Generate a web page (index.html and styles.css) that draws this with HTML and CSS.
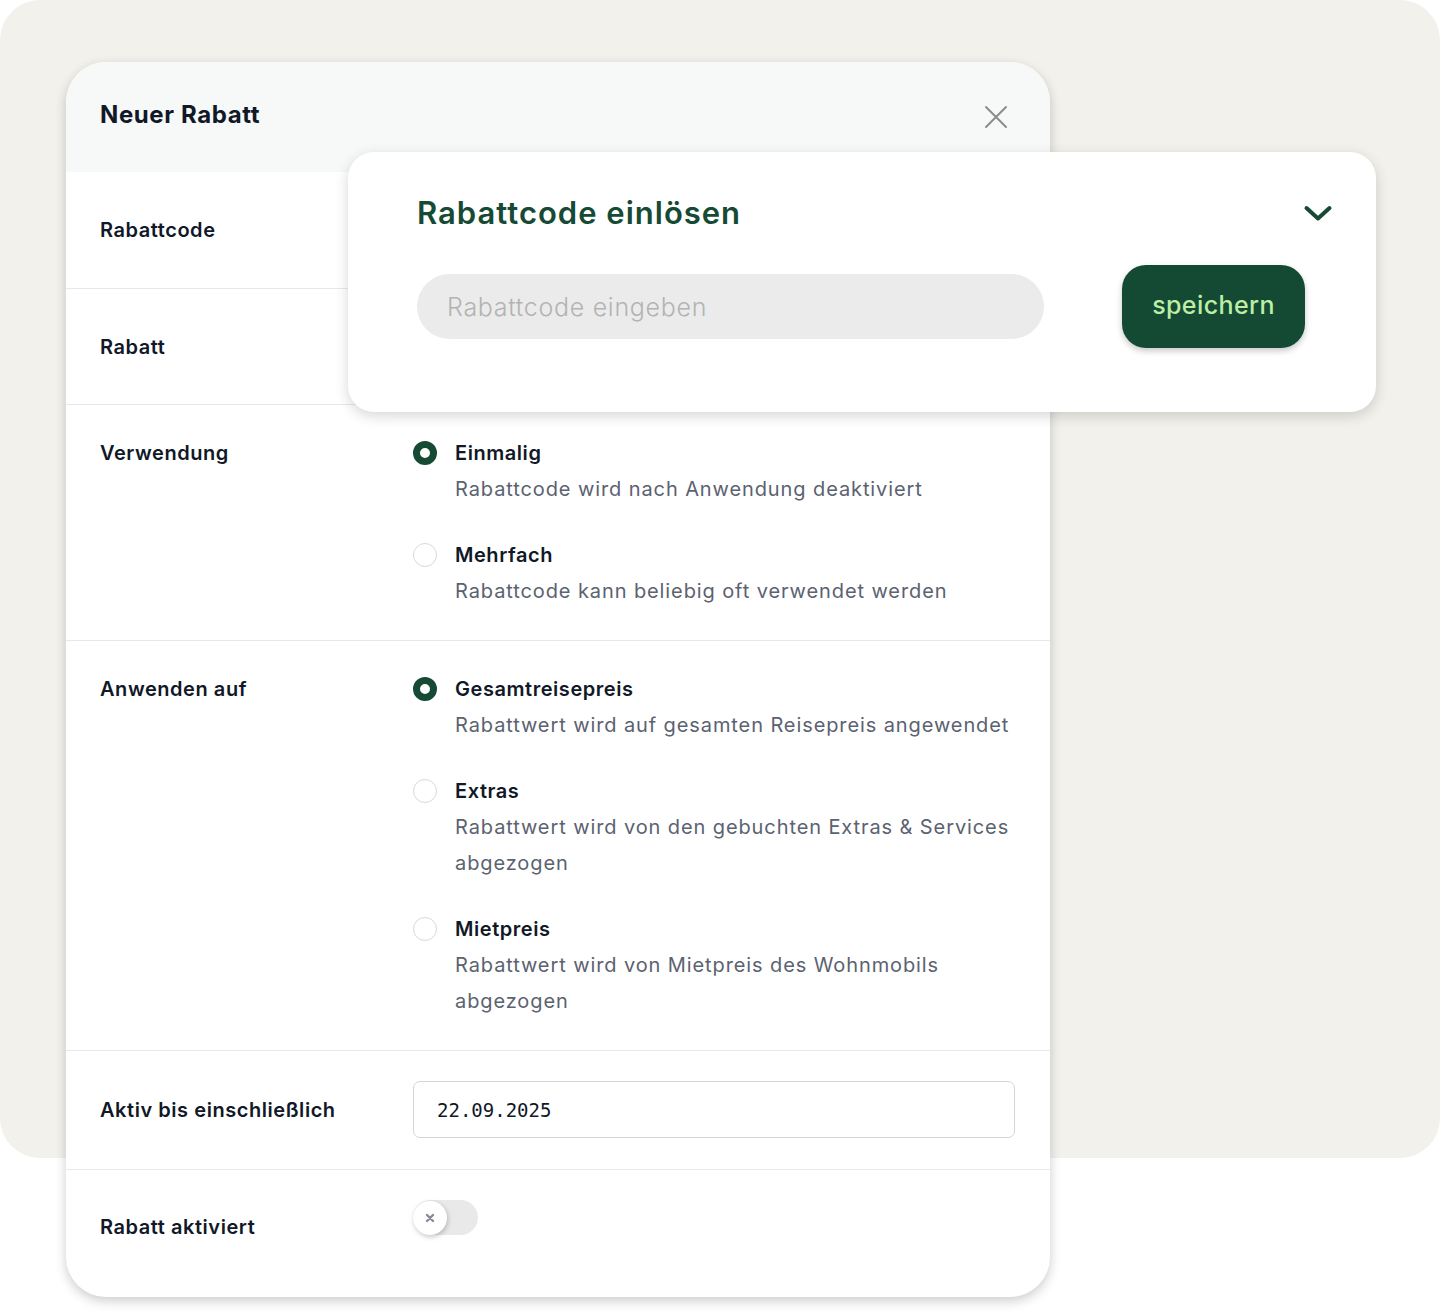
FILE: index.html
```html
<!DOCTYPE html>
<html lang="de">
<head>
<meta charset="utf-8">
<title>Neuer Rabatt</title>
<link rel="stylesheet" href="styles.css">
</head>
<body>
<div class="stage">
  <div class="backdrop">
    <section class="modal">
      <header class="modal-head">
        <h1 class="modal-title">Neuer Rabatt</h1>
        <button class="close" aria-label="Schließen">
          <svg width="24" height="24" viewBox="0 0 24 24"><path d="M2 2 L22 22 M22 2 L2 22" stroke="#8c8c8c" stroke-width="2" fill="none" stroke-linecap="round"/></svg>
        </button>
      </header>

      <div class="row row-simple">
        <div class="label">Rabattcode</div>
      </div>
      <div class="row row-simple">
        <div class="label">Rabatt</div>
      </div>

      <div class="row">
        <div class="label">Verwendung</div>
        <div class="options">
          <div class="option">
            <span class="radio checked"></span>
            <div class="opt-text">
              <div class="opt-title">Einmalig</div>
              <div class="opt-desc">Rabattcode wird nach Anwendung deaktiviert</div>
            </div>
          </div>
          <div class="option">
            <span class="radio"></span>
            <div class="opt-text">
              <div class="opt-title">Mehrfach</div>
              <div class="opt-desc">Rabattcode kann beliebig oft verwendet werden</div>
            </div>
          </div>
        </div>
      </div>

      <div class="row">
        <div class="label">Anwenden auf</div>
        <div class="options">
          <div class="option">
            <span class="radio checked"></span>
            <div class="opt-text">
              <div class="opt-title">Gesamtreisepreis</div>
              <div class="opt-desc">Rabattwert wird auf gesamten Reisepreis angewendet</div>
            </div>
          </div>
          <div class="option">
            <span class="radio"></span>
            <div class="opt-text">
              <div class="opt-title">Extras</div>
              <div class="opt-desc">Rabattwert wird von den gebuchten Extras &amp; Services abgezogen</div>
            </div>
          </div>
          <div class="option">
            <span class="radio"></span>
            <div class="opt-text">
              <div class="opt-title">Mietpreis</div>
              <div class="opt-desc">Rabattwert wird von Mietpreis des Wohnmobils abgezogen</div>
            </div>
          </div>
        </div>
      </div>

      <div class="row row-date">
        <div class="label">Aktiv bis einschließlich</div>
        <div class="date-input">22.09.2025</div>
      </div>

      <div class="row row-last">
        <div class="label label-toggle">Rabatt aktiviert</div>
        <div class="toggle">
          <span class="knob">
            <svg width="10" height="10" viewBox="0 0 10 10"><path d="M2 2 L8 8 M8 2 L2 8" stroke="#858b94" stroke-width="2.4" stroke-linecap="round"/></svg>
          </span>
        </div>
      </div>
    </section>

    <section class="popup">
      <div class="popup-head">
        <h2 class="popup-title">Rabattcode einlösen</h2>
        <svg class="chevron" width="30" height="20" viewBox="0 0 30 20"><path d="M3.5 5 L15 15.5 L26.5 5" stroke="#164a35" stroke-width="4" fill="none" stroke-linecap="round" stroke-linejoin="round"/></svg>
      </div>
      <div class="popup-form">
        <div class="code-input">Rabattcode eingeben</div>
        <button class="save">speichern</button>
      </div>
    </section>
  </div>
</div>
</body>
</html>
```

FILE: styles.css
```css
* { box-sizing: border-box; }
html, body { margin: 0; padding: 0; }
body {
  background: #ffffff;
  font-family: "Inter", "Lato", sans-serif;
  color: #111827;
}
.stage {
  width: 1440px;
  height: 1314px;
  overflow: hidden;
}
.backdrop {
  position: relative;
  height: 1158px;
  background: #f2f1ec;
  border-radius: 40px;
  padding: 62px 0 0 66px;
}
.modal {
  width: 984px;
  background: #ffffff;
  border-radius: 40px;
  box-shadow: 0 4px 12px rgba(0,0,0,0.2);
  overflow: hidden;
}
.modal-head {
  height: 110px;
  background: #f7f8f8;
  display: flex;
  align-items: center;
  justify-content: space-between;
  padding: 0 42px 6px 34px;
}
.modal-title {
  margin: 0;
  font-size: 24px;
  font-weight: 700;
  color: #111827;
  letter-spacing: 0.6px;
}
.close {
  border: 0;
  background: none;
  padding: 0;
  width: 24px;
  height: 24px;
  margin-top: 6px;
  display: flex;
}
.row {
  display: flex;
  border-top: 1px solid #e8e8e8;
  padding: 30px 34px 31px;
}
.modal-head + .row { border-top: 0; }
.row-simple {
  height: 116px;
  align-items: center;
  padding-top: 0;
  padding-bottom: 0;
}
.label {
  width: 313px;
  flex: none;
  font-size: 20px;
  font-weight: 600;
  line-height: 36px;
  letter-spacing: 0.55px;
  color: #111827;
}
.options {
  display: flex;
  flex-direction: column;
  gap: 30px;
}
.option {
  display: flex;
  gap: 18px;
}
.radio {
  flex: none;
  width: 24px;
  height: 24px;
  border-radius: 50%;
  border: 1.5px solid #d8d8d8;
  margin-top: 6px;
  background: #fff;
}
.radio.checked {
  border: 7.5px solid #164a35;
}
.opt-title {
  font-size: 20px;
  font-weight: 600;
  line-height: 36px;
  letter-spacing: 0.55px;
  color: #111827;
}
.opt-desc {
  font-size: 20px;
  font-weight: 400;
  line-height: 36px;
  letter-spacing: 0.9px;
  color: #5b6270;
  max-width: 560px;
}
.row-date { align-items: center; }
.date-input {
  width: 602px;
  height: 57px;
  border: 1.5px solid #d6d6d6;
  border-radius: 7px;
  padding: 0 23px;
  display: flex;
  align-items: center;
  font-family: "DejaVu Sans Mono", monospace;
  font-size: 19px;
  color: #111827;
}
.row-last { padding-bottom: 52px; }
.label-toggle { margin-top: 9px; }
.toggle {
  width: 65px;
  height: 35px;
  border-radius: 18px;
  background: #e9e9e9;
  display: flex;
  align-items: center;
}
.knob {
  width: 34px;
  height: 34px;
  border-radius: 50%;
  background: #fff;
  box-shadow: 1px 2px 5px rgba(0,0,0,0.22);
  display: flex;
  align-items: center;
  justify-content: center;
}
.popup {
  position: absolute;
  left: 348px;
  top: 152px;
  width: 1028px;
  height: 260px;
  background: #fff;
  border-radius: 26px;
  box-shadow: 0 4px 14px rgba(0,0,0,0.16);
  padding: 41px 45px 0 69px;
}
.popup-head {
  display: flex;
  align-items: center;
  justify-content: space-between;
  height: 40px;
}
.popup-title {
  margin: 0;
  font-size: 31px;
  font-weight: 600;
  color: #164a35;
  line-height: 40px;
  letter-spacing: 1px;
}
.chevron { margin-top: 0; margin-right: -2px; }
.popup-form {
  display: flex;
  align-items: center;
  gap: 78px;
  margin-top: 32px;
  margin-right: 26px;
}
.code-input {
  width: 627px;
  height: 65px;
  border-radius: 33px;
  background: #ebebeb;
  padding: 0 30px;
  display: flex;
  align-items: center;
  font-size: 25px;
  font-weight: 300;
  letter-spacing: 0.7px;
  color: #b3b3b3;
}
.save {
  width: 183px;
  height: 83px;
  border: 0;
  border-radius: 24px;
  background: #144a34;
  color: #bdeea4;
  font-family: "Inter", "Lato", sans-serif;
  font-size: 25px;
  font-weight: 500;
  letter-spacing: 0.4px;
  box-shadow: 0 3px 6px rgba(0,0,0,0.22);
  padding: 0 0 4px;
}
```
